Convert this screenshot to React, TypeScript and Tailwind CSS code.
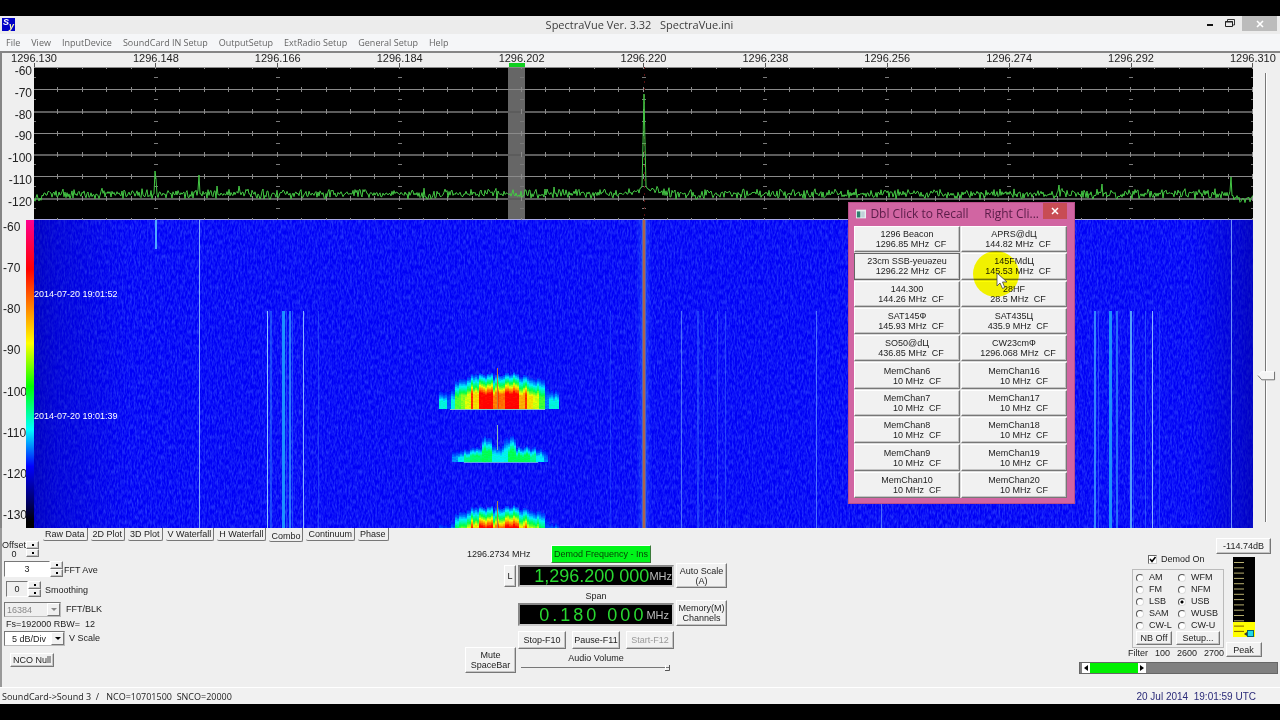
import { useState } from "react";
import type { ButtonHTMLAttributes } from "react";
import clsx from "clsx";

const MENU = [
  "File",
  "View",
  "InputDevice",
  "SoundCard IN Setup",
  "OutputSetup",
  "ExtRadio Setup",
  "General Setup",
  "Help",
];

const FREQS = [
  "1296.130",
  "1296.148",
  "1296.166",
  "1296.184",
  "1296.202",
  "1296.220",
  "1296.238",
  "1296.256",
  "1296.274",
  "1296.292",
  "1296.310",
];

const SPECTRUM_DB = [-60, -70, -80, -90, -100, -110, -120];
const WATERFALL_DB = [-60, -70, -80, -90, -100, -110, -120, -130];

const TABS = [
  "Raw Data",
  "2D Plot",
  "3D Plot",
  "V Waterfall",
  "H Waterfall",
  "Combo",
  "Continuum",
  "Phase",
];

const MODES = [
  "AM",
  "WFM",
  "FM",
  "NFM",
  "LSB",
  "USB",
  "SAM",
  "WUSB",
  "CW-L",
  "CW-U",
];

const MEMORY = [
  { name: "1296 Beacon", freq: "1296.85 MHz  CF" },
  { name: "APRS@dЦ", freq: "144.82 MHz  CF" },
  { name: "23cm SSB-yeuəzeu", freq: "1296.22 MHz  CF" },
  { name: "145FMdЦ", freq: "145.53 MHz  CF" },
  { name: "144.300", freq: "144.26 MHz  CF" },
  { name: "28HF", freq: "28.5 MHz  CF" },
  { name: "SAT145Ф", freq: "145.93 MHz  CF" },
  { name: "SAT435Ц", freq: "435.9 MHz  CF" },
  { name: "SO50@dЦ", freq: "436.85 MHz  CF" },
  { name: "CW23cmФ", freq: "1296.068 MHz  CF" },
  { name: "MemChan6", freq: "10 MHz  CF" },
  { name: "MemChan16", freq: "10 MHz  CF" },
  { name: "MemChan7", freq: "10 MHz  CF" },
  { name: "MemChan17", freq: "10 MHz  CF" },
  { name: "MemChan8", freq: "10 MHz  CF" },
  { name: "MemChan18", freq: "10 MHz  CF" },
  { name: "MemChan9", freq: "10 MHz  CF" },
  { name: "MemChan19", freq: "10 MHz  CF" },
  { name: "MemChan10", freq: "10 MHz  CF" },
  { name: "MemChan20", freq: "10 MHz  CF" },
];

const W = 1219;
const SPEC_H = 153;
const FALL_H = 308;

const random = (seed: number) => {
  let s = seed;
  return () => {
    s = (s * 1664525 + 1013904223) % 4294967296;
    return s / 4294967296;
  };
};

// carriers that stand out of the noise floor: x -> y of the tip
const PEAKS: Record<number, number> = {
  121: 104,
  122: 112,
  165: 108,
  183: 119,
  205: 119,
  520: 120,
  1025: 118,
  1068: 117,
  1197: 110,
};

const buildTrace = () => {
  const rnd = random(7);
  const pts: string[] = [];
  for (let x = 0; x <= W; x += 1) {
    const d = Math.abs(x - 610);
    let y = 127 + (rnd() + rnd() - 1) * 6;
    if (x < 8) y += 4;
    if (x > 1199) y += 4;
    if (d < 30) y -= (30 - d) / 6;
    if (PEAKS[x]) y = PEAKS[x];
    if (d <= 3) y = [27, 76, 119, 121][d];
    pts.push(`${x},${y.toFixed(1)}`);
  }
  return pts.join(" ");
};

const TRACE = buildTrace();

const STOPS: [number, number, number, number][] = [
  [0, 0, 0, 250],
  [0.15, 0, 90, 255],
  [0.3, 0, 240, 255],
  [0.5, 0, 255, 70],
  [0.68, 240, 255, 0],
  [0.82, 255, 140, 0],
  [1, 255, 0, 0],
];

const heat = (v: number) => {
  const c = Math.max(0, Math.min(1, v));
  const i = Math.max(1, STOPS.findIndex((s) => s[0] >= c));
  const a = STOPS[i - 1];
  const b = STOPS[i];
  const t = (c - a[0]) / (b[0] - a[0]);
  const mix = (n: 1 | 2 | 3) => Math.round(a[n] + (b[n] - a[n]) * t);
  return `rgb(${mix(1)},${mix(2)},${mix(3)})`;
};

// [start x, strength, top y] for each slice of a transmission
type Slice = [number, number, number];

const STRONG: Slice[] = [
  [405, 0.34, 22],
  [412, 0.14, 22],
  [416, 0.34, 18],
  [420, 0.56, 10],
  [426, 0.6, 10],
  [430, 0.66, 8],
  [436, 0.94, 5],
  [439, 0.72, 5],
  [445, 1, 4],
  [452, 1, 3],
  [458, 0.84, 6],
  [462, 0.92, 5],
  [465, 0.86, 5],
  [470, 1, 4],
  [476, 1, 3],
  [484, 0.78, 5],
  [490, 0.95, 4],
  [493, 0.72, 6],
  [499, 0.66, 9],
  [505, 0.54, 8],
  [511, 0.18, 14],
  [515, 0.34, 21],
  [524, 0, 40],
];

const WEAK: Slice[] = [
  [418, 0.2, 16],
  [424, 0.3, 14],
  [430, 0.42, 12],
  [436, 0.46, 11],
  [447, 0.48, 1],
  [458, 0.32, 9],
  [470, 0.32, 1],
  [474, 0.48, 1],
  [482, 0.48, 10],
  [496, 0.42, 11],
  [502, 0.3, 13],
  [509, 0.18, 15],
  [514, 0, 30],
];

const buildBurst = (slices: Slice[], height: number, seed: number) => {
  const rnd = random(seed);
  const cells: { x: number; y: number; fill: string }[] = [];
  const end = slices[slices.length - 1][0];
  for (let x = slices[0][0]; x < end; x += 2) {
    let i = slices.length - 1;
    while (slices[i][0] > x) i -= 1;
    const [, peak, top] = slices[i];
    const jitter = (rnd() - 0.5) * 4;
    for (let y = 0; y < height; y += 1) {
      const depth = y - top - jitter;
      if (depth < 0) continue;
      const ramp = Math.min(1, 0.1 + depth / (0.62 * (height - top)));
      const v = peak * ramp + (rnd() - 0.5) * 0.04;
      cells.push({ x, y, fill: heat(v) });
    }
  }
  return cells;
};

const STRONG_CELLS = buildBurst(STRONG, 39, 3);
const WEAK_CELLS = buildBurst(WEAK, 26, 11);

// [x, width, start y, colour, opacity]
const LINES: [number, number, number, string, number][] = [
  [165, 1, 0, "#8fc0ff", 0.85],
  [233, 1, 91, "#9fd8ff", 0.9],
  [236, 2, 91, "#2f8cff", 0.45],
  [248, 3, 91, "#1fa8ff", 0.85],
  [252, 1, 91, "#2f7cff", 0.5],
  [255, 2, 91, "#38a4ff", 0.7],
  [258, 1, 91, "#2f7cff", 0.5],
  [269, 1, 91, "#9fd0ff", 0.85],
  [284, 1, 91, "#4080ff", 0.4],
  [576, 1, 91, "#4080ff", 0.3],
  [647, 1, 91, "#78b0ff", 0.6],
  [663, 2, 91, "#3f80ff", 0.4],
  [669, 1, 91, "#3f80ff", 0.35],
  [683, 1, 91, "#4f90ff", 0.45],
  [691, 1, 91, "#4f90ff", 0.4],
  [782, 1, 91, "#78b0ff", 0.6],
  [847, 1, 91, "#78b0ff", 0.6],
  [1060, 2, 91, "#3fa4ff", 0.8],
  [1064, 1, 91, "#3f80ff", 0.5],
  [1075, 3, 91, "#1fa8ff", 0.85],
  [1082, 2, 91, "#2f90ff", 0.7],
  [1096, 2, 91, "#5fb8ff", 0.85],
  [1099, 1, 91, "#2f70ff", 0.5],
  [1111, 1, 91, "#3f80ff", 0.5],
  [1118, 1, 91, "#9fd0ff", 0.85],
  [1125, 1, 91, "#3f80ff", 0.4],
  [1197, 1, 0, "#7fa8ff", 0.85],
];

const Button = ({
  className,
  ...props
}: ButtonHTMLAttributes<HTMLButtonElement>) => (
  <button
    type="button"
    className={clsx(
      "flex items-center justify-center border border-t-white border-l-white border-r-[#777] border-b-[#777] bg-[#f1f1f1] text-center text-[9px] leading-[10px] whitespace-pre shadow-[inset_-1px_-1px_0_#c4c4c4]",
      className,
    )}
    {...props}
  />
);

const Spinner = ({ label }: { label: string }) => (
  <div className="flex flex-col">
    <Button aria-label={`${label} up`} className="h-2 w-[13px]">
      <span className="size-0.5 bg-black" />
    </Button>
    <Button aria-label={`${label} down`} className="h-2 w-[13px]">
      <span className="size-0.5 bg-black" />
    </Button>
  </div>
);

const TitleBar = () => (
  <header className="flex h-[18px] items-start justify-between bg-[#ececec]">
    <div className="flex flex-1 items-start pt-0.5 pl-0.5">
      <div className="relative size-[13px] overflow-hidden bg-[#0000c8] font-bold italic">
        <span className="absolute top-0 left-px text-[9px] leading-[9px] text-white">
          S
        </span>
        <span className="absolute right-px bottom-0 text-[9px] leading-[9px] text-[#ffffb0]">
          y
        </span>
      </div>
    </div>
    <h1 className="font-['Open_Sans',sans-serif] text-[11px] leading-[18px] whitespace-pre text-[#3c3c3c]">
      SpectraVue Ver. 3.32{"   "}SpectraVue.ini
    </h1>
    <div className="flex flex-1 items-start justify-end gap-[7px] pr-[3px]">
      <button type="button" aria-label="Minimize" className="h-[15px] w-3">
        <svg viewBox="0 0 12 15" className="h-[15px] w-3">
          <path d="M3 9h6" stroke="#111" strokeWidth="2" />
        </svg>
      </button>
      <button type="button" aria-label="Restore" className="h-[15px] w-3">
        <svg viewBox="0 0 12 15" className="h-[15px] w-3" fill="none">
          <path d="M4.500 5.500V3.500H11.500V9H9.500" stroke="#333" />
          <path d="M2.500 5.500h7v5h-7z" stroke="#222" />
          <path d="M2 6h8" stroke="#222" strokeWidth="1" />
        </svg>
      </button>
      <button
        type="button"
        aria-label="Close"
        className="flex h-[15px] w-[35px] items-center justify-center bg-[#bcbcbc]"
      >
        <svg viewBox="0 0 8 8" className="size-2">
          <path d="M1 1l6 6M7 1L1 7" stroke="#fff" strokeWidth="1.600" />
        </svg>
      </button>
    </div>
  </header>
);

const Spectrum = () => {
  const rows = Array.from({ length: 8 }, (_, i) => Math.round(i * 21.86));
  return (
    <svg
      viewBox={`0 0 ${W} ${SPEC_H}`}
      preserveAspectRatio="none"
      className="block h-[153px] w-full bg-black"
      shapeRendering="crispEdges"
    >
      <rect x="474" width="17" height={SPEC_H} fill="#666" />
      {rows.map((y, i) => (
        <g key={y}>
          <rect
            y={i === 7 ? 152 : y}
            width={W}
            height={i === 2 || i === 4 || i === 6 ? 2 : 1}
            fill={
              i === 7
                ? "#a9a9e8"
                : i === 2 || i === 4 || i === 6
                  ? "#5c5c5c"
                  : "#8a8a8a"
            }
          />
          {Array.from({ length: 50 }, (_, n) => (
            <rect
              key={n}
              x={Math.round((n + 1) * 24.38) - 1}
              y={i === 0 ? 0 : y - 2}
              width="1"
              height={i === 0 ? 2 : 5}
              fill="#8a8a8a"
            />
          ))}
          {i < 7 &&
            Array.from({ length: 11 }, (_, n) => (
              <rect
                key={n}
                x={Math.round(n * 121.9) - 2}
                y={y + 10}
                width="4"
                height="1"
                fill="#7a7a7a"
              />
            ))}
        </g>
      ))}
      <path d="M610.500 0V153" stroke="#5a1010" strokeDasharray="2 5" />
      <polyline
        points={TRACE}
        fill="none"
        stroke="#45c845"
        strokeWidth="1"
        shapeRendering="auto"
      />
    </svg>
  );
};

const Waterfall = () => (
  <svg
    viewBox={`0 0 ${W} ${FALL_H}`}
    preserveAspectRatio="none"
    className="block h-[308px] w-full bg-[#0000f6]"
  >
    <defs>
      <linearGradient id="edges">
        <stop offset="0" stopColor="#0000a0" stopOpacity="0.6" />
        <stop offset="0.02" stopColor="#0000b0" stopOpacity="0.4" />
        <stop offset="0.08" stopColor="#0000c0" stopOpacity="0" />
        <stop offset="0.95" stopColor="#0000c0" stopOpacity="0" />
        <stop offset="1" stopColor="#0000a0" stopOpacity="0.6" />
      </linearGradient>
      <linearGradient id="glow">
        <stop offset="0" stopColor="#2060ff" stopOpacity="0" />
        <stop offset="0.5" stopColor="#3070ff" stopOpacity="0.6" />
        <stop offset="1" stopColor="#2060ff" stopOpacity="0" />
      </linearGradient>
      <filter id="noise" x="0" y="0" width="100%" height="100%">
        <feTurbulence
          type="fractalNoise"
          baseFrequency="0.6 0.2"
          numOctaves="2"
          seed="4"
        />
        <feColorMatrix values="0 0 0 0 0.080  0 0 0 0 0.180  0 0 0 0 1  1 0 0 0 -0.350" />
      </filter>
    </defs>
    <rect width={W} height={FALL_H} filter="url(#noise)" />
    <rect width={W} height={FALL_H} fill="url(#edges)" />
    <g shapeRendering="crispEdges">
      {LINES.map(([x, w, y, fill, opacity]) => (
        <rect
          key={x}
          x={x}
          y={y}
          width={w}
          height={FALL_H - y}
          fill={fill}
          opacity={opacity}
        />
      ))}
      <rect x="121" width="2" height="29" fill="#4fa8ff" />
      {STRONG_CELLS.map((c, i) => (
        <rect key={i} x={c.x} y={c.y + 150} width="2" height="1" fill={c.fill} />
      ))}
      <rect x="416" y="189" width="95" height="1" fill="#88c8c8" />
      {WEAK_CELLS.map((c, i) => (
        <rect key={i} x={c.x} y={c.y + 216} width="2" height="1" fill={c.fill} />
      ))}
      <rect x="430" y="242" width="74" height="1" fill="#60a8e0" />
      {STRONG_CELLS.map((c, i) => (
        <rect key={i} x={c.x} y={c.y + 283} width="2" height="1" fill={c.fill} />
      ))}
      <rect x="463" y="148" width="1" height="41" fill="#c87838" />
      <rect x="463" y="205" width="1" height="25" fill="#88b8b0" />
      <rect x="463" y="281" width="1" height="27" fill="#a88848" />
    </g>
    <rect x="602" width="16" height={FALL_H} fill="url(#glow)" />
    <rect x="608" width="4" height={FALL_H} fill="#5068b8" />
    <rect x="609" width="2" height={FALL_H} fill="#b0604c" />
  </svg>
);

const MemoryDialog = () => (
  <div
    role="dialog"
    aria-label="Memory channels"
    className="absolute top-[149px] right-[205px] w-[227px] border border-[#b8508a] bg-[#d165a2] pr-[7px] pb-[5px] pl-[5px]"
  >
    <div className="flex h-[23px] items-start gap-1">
      <svg viewBox="0 0 12 10" className="mt-1.5 ml-0.5 h-2.5 w-3">
        <rect width="12" height="10" fill="#e8f0f0" />
        <rect x="1" y="2" width="4" height="7" fill="#308070" />
        <rect x="6" y="2" width="4" height="7" fill="#c0d0d8" />
      </svg>
      <h2 className="flex-1 font-['Open_Sans',sans-serif] text-[12px] leading-[22px] whitespace-pre text-[#5a1c48]">
        Dbl Click to Recall{"     "}Right Cli...
      </h2>
      <button
        type="button"
        aria-label="Close"
        className="flex h-4 w-6 shrink-0 items-center justify-center bg-[#c84c54]"
      >
        <svg viewBox="0 0 8 8" className="size-2">
          <path d="M1 1l6 6M7 1L1 7" stroke="#fff" strokeWidth="1.500" />
        </svg>
      </button>
    </div>
    <div className="grid h-[272px] grid-cols-2 grid-rows-10 gap-px bg-[#dcdcdc]">
      {MEMORY.map((m, i) => (
        <Button
          key={m.name}
          className={clsx(
            "flex-col",
            i === 2 && "outline outline-[#666] -outline-offset-1",
          )}
        >
          <span>{m.name}</span>
          <span className={i < 10 ? "pl-2" : "pl-5"}>{m.freq}</span>
        </Button>
      ))}
    </div>
    <div className="pointer-events-none absolute top-[48px] left-[124px] size-[46px] rounded-full bg-[#ffff00] mix-blend-multiply" />
    <svg
      viewBox="0 0 12 18"
      className="pointer-events-none absolute top-[69px] left-[147px] h-[18px] w-3"
    >
      <path
        d="M1 1v13l3-3 2.500 5.500 2.300-1L6.500 10H11z"
        fill="#fff"
        stroke="#444"
        strokeWidth="0.800"
      />
    </svg>
  </div>
);

const Display = () => (
  <section className="relative flex border-t-2 border-l-2 border-[#858585]">
    <div className="flex w-8 flex-col text-[12px] leading-[14px] text-[#222]">
      <div className="flex h-[167px] flex-col pt-[11px] pr-0.5">
        <div className="flex h-[145px] flex-col items-end justify-between">
          {SPECTRUM_DB.map((v) => (
            <span key={v}>{v}</span>
          ))}
        </div>
      </div>
      <div className="flex h-[308px]">
        <div className="flex h-[302px] w-6 flex-col justify-between pl-px">
          {WATERFALL_DB.map((v) => (
            <span key={v}>{v}</span>
          ))}
        </div>
        <div className="w-2 bg-[linear-gradient(#ff0090,#ff0000_16%,#ff8000_28%,#ffff00_40%,#00ff00_54%,#00ffff_68%,#0000ff_80%,#000060_92%,#000_98%)]" />
      </div>
    </div>
    <div className="relative min-w-0 flex-1">
      <div className="flex h-3.5 justify-between">
        {FREQS.map((f) => (
          <div key={f} className="relative flex w-0 justify-center">
            <span className="text-[11px] leading-[11px] text-[#222]">{f}</span>
            <span className="absolute bottom-0 h-1 w-px bg-[#555]" />
          </div>
        ))}
      </div>
      <span className="absolute top-[10px] left-[39%] h-1 w-4 bg-[#10d020]" />
      <Spectrum />
      <Waterfall />
      <span className="absolute top-[236px] left-0 text-[9px] leading-[11px] text-white">
        2014-07-20 19:01:52
      </span>
      <span className="absolute top-[358px] left-0 text-[9px] leading-[11px] text-white">
        2014-07-20 19:01:39
      </span>
    </div>
    <div className="relative w-[27px]">
      <div className="absolute top-5 bottom-1.5 left-3 w-0.5 border-r border-white bg-[#777]" />
      <svg
        viewBox="0 0 20 10"
        className="absolute top-[318px] left-1 h-2.5 w-[19px]"
      >
        <path d="M1 4.500L5 0.500H18.500V9H5z" fill="#f4f4f4" stroke="#fff" />
        <path d="M1 4.500L5 9H18.500V0.500" fill="none" stroke="#666" />
      </svg>
      <input
        type="range"
        aria-label="Waterfall offset"
        defaultValue={33}
        className="absolute inset-0 h-full w-full opacity-0 [direction:rtl] [writing-mode:vertical-lr]"
      />
    </div>
    <MemoryDialog />
  </section>
);

const FftPanel = () => (
  <div className="flex flex-col pl-1">
    <div className="flex h-5 items-start">
      <div className="-ml-0.5 flex w-6 flex-col text-center leading-[9px]">
        <span>Offset</span>
        <span>0</span>
      </div>
      <Spinner label="Offset" />
    </div>
    <div className="flex h-5 items-start">
      <input
        id="fft-ave"
        defaultValue="3"
        className="h-4 w-[46px] border border-t-[#777] border-r-white border-b-white border-l-[#777] bg-white text-center"
      />
      <Spinner label="FFT Ave" />
      <label htmlFor="fft-ave" className="pl-px leading-[18px]">
        FFT Ave
      </label>
    </div>
    <div className="flex h-[21px] items-start pl-0.5">
      <input
        id="smoothing"
        defaultValue="0"
        className="h-4 w-[22px] border border-t-[#777] border-r-white border-b-white border-l-[#777] text-center"
      />
      <Spinner label="Smoothing" />
      <label htmlFor="smoothing" className="pl-1 leading-[18px]">
        Smoothing
      </label>
    </div>
    <div className="flex items-center">
      <div className="relative">
        <select
          id="blk"
          disabled
          className="h-[15px] w-[57px] appearance-none border border-t-[#777] border-r-[#bbb] border-b-[#bbb] border-l-[#777] pl-0.5 leading-3 text-[#888]"
        >
          <option>16384</option>
        </select>
        <span className="pointer-events-none absolute top-px right-px flex h-[13px] w-[13px] items-center justify-center border border-t-white border-r-[#777] border-b-[#777] border-l-white">
          <svg viewBox="0 0 6 4" className="h-1 w-1.5">
            <path d="M0 0h6L3 3z" fill="#888" />
          </svg>
        </span>
      </div>
      <label htmlFor="blk" className="pl-[5px]">
        FFT/BLK
      </label>
    </div>
    <p className="h-3.5 pl-0.5 leading-3.5 whitespace-pre">
      Fs=192000 RBW={"  "}12
    </p>
    <div className="flex items-center">
      <div className="relative">
        <select
          id="vscale"
          className="h-[15px] w-[61px] appearance-none border border-t-[#777] border-r-[#bbb] border-b-[#bbb] border-l-[#777] bg-white pl-[7px] leading-3"
        >
          <option>5 dB/Div</option>
          <option>10 dB/Div</option>
        </select>
        <span className="pointer-events-none absolute top-px right-px flex h-[13px] w-[13px] items-center justify-center border border-t-white border-r-[#777] border-b-[#777] border-l-white bg-[#f1f1f1]">
          <svg viewBox="0 0 6 4" className="h-1 w-1.5">
            <path d="M0 0h6L3 3z" fill="#000" />
          </svg>
        </span>
      </div>
      <label htmlFor="vscale" className="pl-1">
        V Scale
      </label>
    </div>
    <Button className="mt-[7px] ml-1.5 h-3.5 w-[44px]">NCO Null</Button>
  </div>
);

const TunePanel = () => (
  <div className="grid grid-cols-[51px_156px_51px] content-start gap-x-0.5 pt-1">
    <span className="col-span-2 flex h-[18px] items-center justify-between pl-0.5">
      <span className="whitespace-nowrap">1296.2734 MHz</span>
      <span className="mr-[23px] flex h-[18px] w-[100px] items-center justify-center border border-t-white border-r-[#3a7a3a] border-b-[#3a7a3a] border-l-white bg-[#00f51a] whitespace-nowrap text-[#064406]">
        Demod Frequency - Ins
      </span>
    </span>
    <span />

    <Button className="mt-0.5 h-[22px] w-3 justify-self-end">L</Button>
    <output className="mt-0.5 flex h-[22px] items-center justify-end border-2 border-t-[#888] border-r-[#ccc] border-b-[#ccc] border-l-[#888] bg-black text-[18px] leading-[18px] text-[#28d830]">
      1,296.200 000
      <span className="text-[11px] text-[#bbb]">MHz</span>
    </output>
    <Button className="h-[25px]">{"Auto Scale\n(A)"}</Button>

    <span className="col-start-2 h-3 text-center leading-4">Span</span>
    <span />

    <output className="col-start-2 mt-[3px] flex h-[23px] items-center justify-end gap-[3px] border-2 border-t-[#888] border-r-[#ccc] border-b-[#ccc] border-l-[#888] bg-black text-[18px] leading-[18px] text-[#28d830]">
      {"0.180 000".split("").map((d, i) => (
        <span key={i} className="whitespace-pre">
          {d}
        </span>
      ))}
      <span className="pr-[3px] text-[11px] text-[#bbb]">MHz</span>
    </output>
    <Button className="h-[26px] border-t-[#999] border-l-[#999] shadow-[inset_-1px_-1px_0_#777]">
      {"Memory(M)\nChannels"}
    </Button>

    <div className="col-start-2 mt-[5px] flex h-[18px] justify-between">
      <Button className="w-12">Stop-F10</Button>
      <Button className="w-12">Pause-F11</Button>
      <Button disabled className="w-12 text-[#999]">
        Start-F12
      </Button>
    </div>
    <span />

    <Button className="-mt-0.5 h-[26px]">{"Mute\nSpaceBar"}</Button>
    <div className="relative flex flex-col items-center pt-1">
      <label htmlFor="volume">Audio Volume</label>
      <svg viewBox="0 0 150 8" className="h-2 w-[150px]" fill="none">
        <path d="M0 3.500H148" stroke="#777" />
        <path d="M144 6.500H148.500V1" stroke="#555" />
        <path d="M144.500 1V6" stroke="#fff" />
      </svg>
      <input
        id="volume"
        type="range"
        defaultValue={100}
        className="absolute bottom-0 h-3 w-[150px] opacity-0"
      />
    </div>
  </div>
);

const DemodPanel = () => {
  const [mode, setMode] = useState("USB");
  return (
    <div className="flex w-[201px] flex-col pr-0.5">
      <div className="flex justify-end pr-[7px]">
        <div className="flex w-24 flex-col pt-[13px]">
          <label className="flex items-center gap-1 pl-5">
            <span className="relative size-[9px]">
              <input
                type="checkbox"
                defaultChecked
                className="peer block size-[9px] appearance-none border border-t-[#666] border-r-[#ccc] border-b-[#ccc] border-l-[#666] bg-white"
              />
              <svg
                viewBox="0 0 9 9"
                className="pointer-events-none absolute inset-0 hidden size-[9px] peer-checked:block"
              >
                <path
                  d="M2 4l2 2.500L7.500 2"
                  fill="none"
                  stroke="#000"
                  strokeWidth="1.500"
                />
              </svg>
            </span>
            <span>Demod On</span>
          </label>
          <fieldset className="mt-1 ml-1 border border-[#bbb] px-[3px] pt-[2px] pb-0.5">
            <div className="grid grid-cols-[42px_1fr] gap-y-px">
              {MODES.map((m) => (
                <label
                  key={m}
                  className="flex h-[11px] items-center gap-[5px] whitespace-nowrap"
                >
                  <input
                    type="radio"
                    name="mode"
                    checked={mode === m}
                    onChange={() => setMode(m)}
                    className="size-2 shrink-0 appearance-none rounded-full border border-t-[#555] border-r-[#ddd] border-b-[#ddd] border-l-[#555] bg-white checked:bg-[radial-gradient(#000_1px,#fff_2px)]"
                  />
                  <span>{m}</span>
                </label>
              ))}
            </div>
            <div className="flex justify-between">
              <Button className="h-3.5 w-9">NB Off</Button>
              <Button className="h-3.5 w-11">Setup...</Button>
            </div>
          </fieldset>
          <div className="flex justify-between leading-[11px]">
            <span>Filter</span>
            <span>100</span>
            <span>2600</span>
            <span>2700</span>
          </div>
        </div>
        <div className="-ml-2 flex h-[121px] w-[55px] flex-col items-center">
          <Button className="-mt-[3px] h-4 w-full shrink-0">-114.74dB</Button>
          <svg viewBox="0 0 22 80" className="mt-[3px] h-[80px] w-[22px] shrink-0">
            <rect width="22" height="80" fill="#000" />
            <rect y="65" width="22" height="15" fill="#ff0" />
            {Array.from({ length: 14 }, (_, i) => (
              <rect
                key={i}
                x="1"
                y={5 + i * 5.3}
                width="10"
                height="1"
                fill={i > 11 ? "#806000" : "#b8b070"}
              />
            ))}
            <path d="M11 77l3-2v4z" fill="#333" />
            <rect
              x="14.500"
              y="73.500"
              width="6"
              height="6"
              fill="#20d8e8"
              stroke="#086070"
            />
          </svg>
          <Button className="mt-[5px] h-[15px] w-9 shrink-0">Peak</Button>
        </div>
      </div>
      <div className="flex h-3 border border-[#666] bg-[#808080] pl-0.5">
        <button
          type="button"
          aria-label="Filter low"
          className="flex w-2 items-center justify-center bg-white"
        >
          <svg viewBox="0 0 4 6" className="h-1.5 w-1">
            <path d="M4 0v6L0 3z" />
          </svg>
        </button>
        <div className="w-12 bg-[#00f000]" />
        <button
          type="button"
          aria-label="Filter high"
          className="flex w-2 items-center justify-center bg-white"
        >
          <svg viewBox="0 0 4 6" className="h-1.5 w-1">
            <path d="M0 0v6l4-3z" />
          </svg>
        </button>
      </div>
    </div>
  );
};

export default function App() {
  const [tab, setTab] = useState("Combo");

  return (
    <div className="flex min-h-screen flex-col bg-black py-4 font-['Liberation_Sans',Arial,sans-serif] text-[9px] leading-[11px] text-[#222]">
      <div className="flex flex-1 flex-col bg-[#efefef]">
        <TitleBar />
        <nav className="flex h-[17px] items-center gap-[11px] bg-[#f5f6f8] pl-1.5 font-['Open_Sans',sans-serif] text-[9px]">
          {MENU.map((m) => (
            <button key={m} type="button" className="text-[#666]">
              {m}
            </button>
          ))}
        </nav>
        <Display />
        <main className="flex flex-1 flex-col border-l-2 border-[#999]">
          <div role="tablist" className="flex h-[13px] gap-[3px] pl-[41px]">
            {TABS.map((t) => (
              <button
                key={t}
                type="button"
                role="tab"
                aria-selected={tab === t}
                onClick={() => setTab(t)}
                className={clsx(
                  "rounded-b-xs border-r border-b border-[#777] px-0.5 whitespace-nowrap",
                  tab === t ? "h-3.5 pt-[3px]" : "h-[13px]",
                )}
              >
                {t}
              </button>
            ))}
          </div>
          <div className="-ml-0.5 grid grid-cols-[465px_1fr_auto]">
            <FftPanel />
            <TunePanel />
            <DemodPanel />
          </div>
        </main>
        <footer className="flex h-[17px] items-center justify-between border-t border-white bg-[#f1f1f1] pr-6 pl-0.5">
          <span className="font-['Open_Sans',sans-serif] text-[9px] whitespace-pre">
            SoundCard-&gt;Sound 3{"  "}/{"   "}NCO=10701500{"  "}SNCO=20000
          </span>
          <span className="text-[10px] whitespace-pre text-[#2a2a78]">
            20 Jul 2014{"  "}19:01:59 UTC
          </span>
        </footer>
      </div>
    </div>
  );
}
